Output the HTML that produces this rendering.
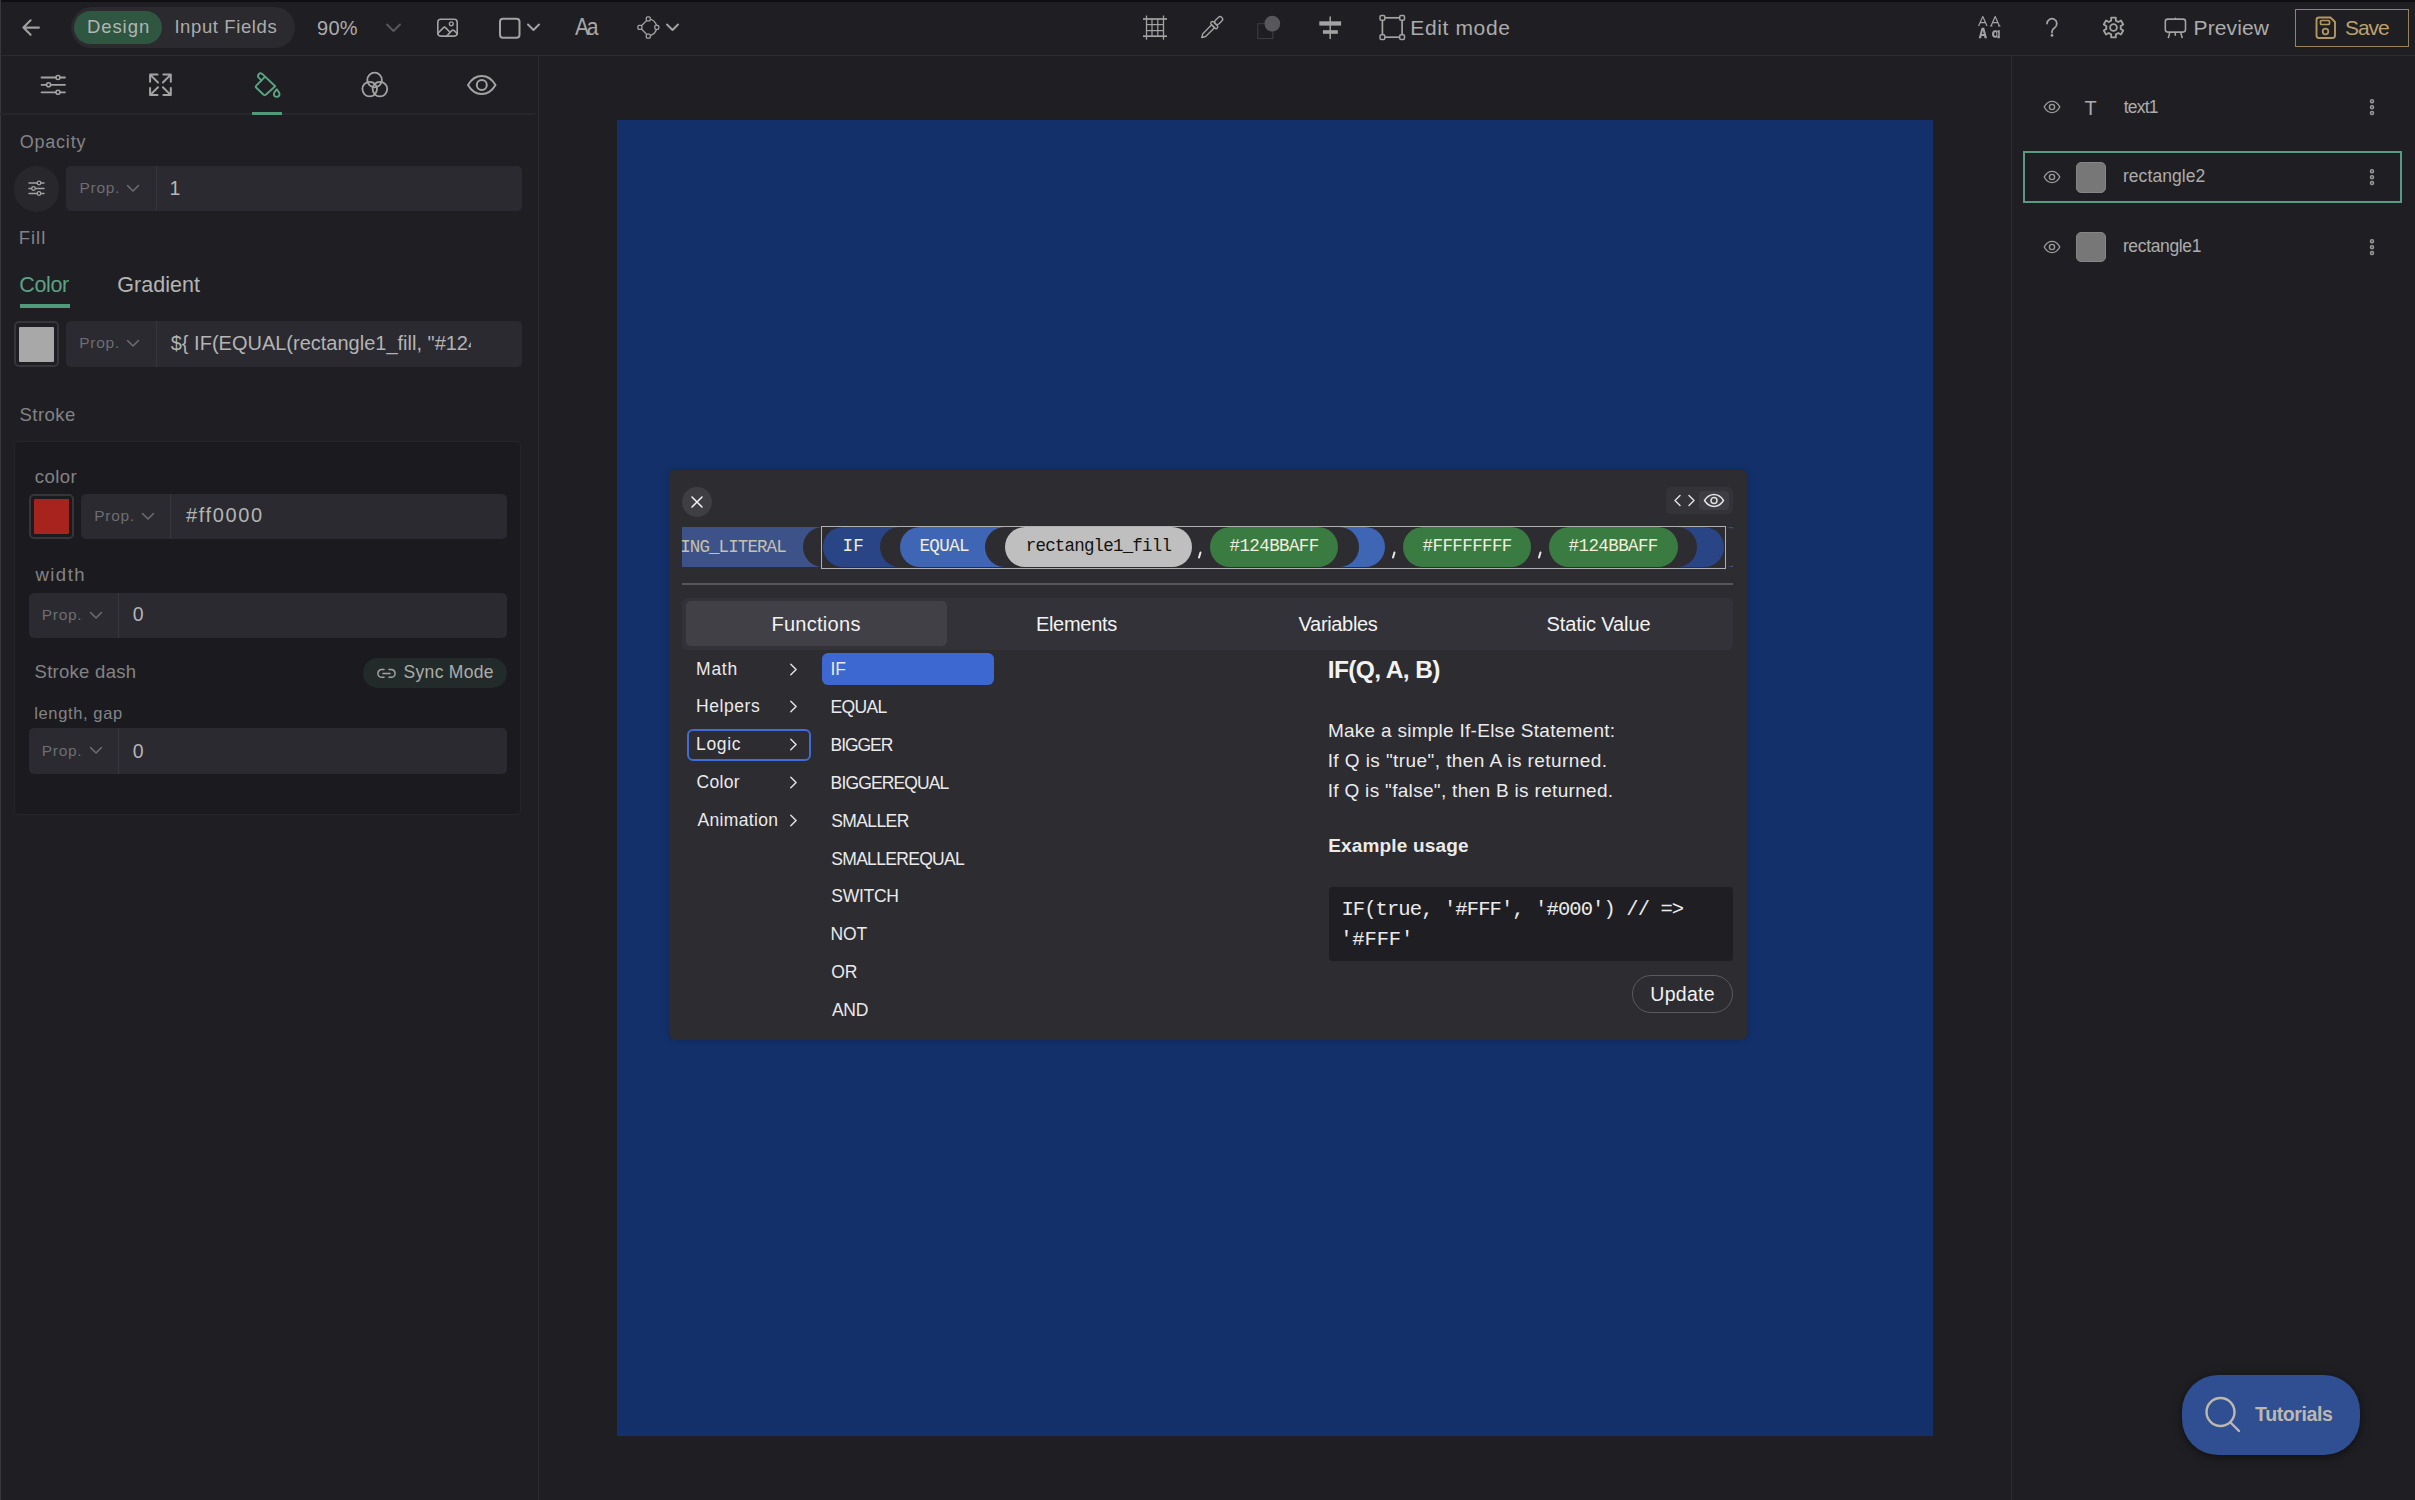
<!DOCTYPE html><html><head><meta charset="utf-8"><style>
html,body{margin:0;padding:0;}
body{width:2415px;height:1500px;overflow:hidden;position:relative;background:#1f1f23;font-family:"Liberation Sans",sans-serif;}
.t{position:absolute;white-space:pre;}
.r{position:absolute;}
</style></head><body>
<div class="r" style="left:0px;top:0px;width:2415px;height:56px;background:#1f1f23;"></div>
<div class="r" style="left:0px;top:0px;width:2415px;height:2px;background:#0f0f11;"></div>
<div class="r" style="left:0px;top:55px;width:2415px;height:1px;background:#2b2b30;"></div>
<div class="r" style="left:0px;top:0px;width:1.3px;height:1500px;background:#37373c;"></div>
<svg class="r" style="left:14px;top:12px;" width="36" height="32" viewBox="14 12 36 32" fill="none"><path d="M38.9 27.6H24M30.6 20.3L23.4 27.6 30.6 34.8" stroke="#a0a0a0" stroke-width="2.1" stroke-linecap="round" stroke-linejoin="round"/></svg>
<div class="r" style="left:71px;top:7px;width:224px;height:41px;background:#2a2a2f;border-radius:21px;"></div>
<div class="r" style="left:74px;top:11px;width:87.5px;height:33px;background:#2e5641;border-radius:17px;"></div>
<div class="t" style="left:86.90px;top:17.57px;font-size:18.5px;line-height:18.5px;color:#b4b4b4;font-family:'Liberation Sans', sans-serif;letter-spacing:0.945px;">Design</div>
<div class="t" style="left:174.38px;top:17.57px;font-size:18.5px;line-height:18.5px;color:#acacac;font-family:'Liberation Sans', sans-serif;letter-spacing:0.602px;">Input Fields</div>
<div class="t" style="left:317.12px;top:17.53px;font-size:20px;line-height:20px;color:#acacac;font-family:'Liberation Sans', sans-serif;letter-spacing:0.250px;">90%</div>
<svg class="r" style="left:385px;top:22px;" width="17" height="12" viewBox="0 0 17 12" fill="none"><path d="M2 2.5l6.5 6.5L15 2.5" stroke="#5a5a5e" stroke-width="1.8" stroke-linecap="round" stroke-linejoin="round"/></svg>
<svg class="r" style="left:432px;top:14px;" width="30" height="28" viewBox="432 14 30 28" fill="none"><g stroke="#a3a3a3" stroke-width="1.6" stroke-linecap="round" stroke-linejoin="round"><rect x="437.8" y="19.2" width="19.4" height="16.9" rx="3"/><circle cx="451.3" cy="23.8" r="1.9" stroke-width="1.4"/><path d="M437.9 33.2L443.5 27.6Q444.5 26.7 445.5 27.6L449.5 31.8"/><path d="M446.5 36.3L452 30.4Q452.9 29.6 453.8 30.4L457.4 33.6"/></g></svg>
<svg class="r" style="left:498px;top:17px;" width="23" height="22" viewBox="0 0 23 22" fill="none"><rect x="2" y="1.8" width="19.5" height="19" rx="3" stroke="#a3a3a3" stroke-width="2"/></svg>
<svg class="r" style="left:526px;top:22px;" width="15" height="11" viewBox="0 0 15 11" fill="none"><path d="M2 2.5l5.5 5.5L13 2.5" stroke="#a3a3a3" stroke-width="2" stroke-linecap="round" stroke-linejoin="round"/></svg>
<div class="t" style="left:574.80px;top:15.32px;font-size:24.5px;line-height:24.5px;color:#a8a8a8;font-family:'Liberation Sans', sans-serif;letter-spacing:-2.700px;transform:scaleX(0.86);transform-origin:0 0;font-weight:300;">Aa</div>
<svg class="r" style="left:636px;top:15px;" width="25" height="25" viewBox="0 0 25 25" fill="none"><path d="M12.3 3.9L3.9 12.3 12.3 21.1" stroke="#a3a3a3" stroke-width="1.3" stroke-linejoin="round"/><path d="M12.3 3.9A8.4 8.4 0 0 1 20.7 12.3 8.4 8.4 0 0 1 12.3 20.7" stroke="#a3a3a3" stroke-width="1.3"/><rect x="10.3" y="1.9" width="4" height="4" rx="1.2" fill="#1f1f23" stroke="#a3a3a3" stroke-width="1.3"/><rect x="1.9" y="10.3" width="4" height="4" rx="1.2" fill="#1f1f23" stroke="#a3a3a3" stroke-width="1.3"/><rect x="18.8" y="10.3" width="4" height="4" rx="1.2" fill="#1f1f23" stroke="#a3a3a3" stroke-width="1.3"/><rect x="10.3" y="19.1" width="4" height="4" rx="1.2" fill="#1f1f23" stroke="#a3a3a3" stroke-width="1.3"/></svg>
<svg class="r" style="left:665px;top:22px;" width="15" height="11" viewBox="0 0 15 11" fill="none"><path d="M2 2.5l5.5 5.5L13 2.5" stroke="#a3a3a3" stroke-width="2" stroke-linecap="round" stroke-linejoin="round"/></svg>
<svg class="r" style="left:1140px;top:12px;" width="30" height="30" viewBox="1140 12 30 30" fill="none"><path d="M1146.5 15.5V39.7" stroke="#a3a3a3" stroke-width="1.3"/><path d="M1163.5 15.5V39.7" stroke="#a3a3a3" stroke-width="1.3"/><path d="M1143 19H1167" stroke="#a3a3a3" stroke-width="1.7"/><path d="M1143 36.2H1167" stroke="#a3a3a3" stroke-width="1.7"/><path d="M1152 19V36.2" stroke="#a3a3a3" stroke-width="1.2"/><path d="M1157.8 19V36.2" stroke="#a3a3a3" stroke-width="1.2"/><path d="M1146.5 24.6H1163.5" stroke="#a3a3a3" stroke-width="1.2"/><path d="M1146.5 30.6H1163.5" stroke="#a3a3a3" stroke-width="1.2"/></svg>
<svg class="r" style="left:1196px;top:12px;" width="32" height="32" viewBox="0 0 32 32" fill="none"><g transform="translate(15.65 15.65) rotate(-45) translate(-14.5 0)" stroke="#a3a3a3" stroke-width="1.4" stroke-linejoin="round"><path d="M0.5 0L4 -2H16.5V2H4Z"/><rect x="16.5" y="-4.3" width="3.4" height="8.6" rx="1.7"/><rect x="19.9" y="-2.5" width="9" height="5" rx="2.5"/></g></svg>
<svg class="r" style="left:1250px;top:10px;" width="35" height="35" viewBox="0 0 35 35" fill="none"><rect x="7.8" y="13.7" width="15.1" height="14.9" stroke="#3e3e43" stroke-width="1"/><circle cx="22.3" cy="13.6" r="7.85" fill="#58585c"/></svg>
<svg class="r" style="left:1315px;top:12px;" width="30" height="30" viewBox="0 0 30 30" fill="none"><path d="M15.2 5V26.5" stroke="#a3a3a3" stroke-width="1.5" stroke-linecap="round"/><rect x="4.3" y="9.3" width="21.8" height="4.3" fill="#a3a3a3"/><rect x="7.9" y="18.2" width="14.9" height="3.6" fill="#a3a3a3"/></svg>
<svg class="r" style="left:1375px;top:10px;" width="35" height="35" viewBox="0 0 35 35" fill="none"><rect x="7.4" y="7.8" width="19.7" height="19.4" stroke="#a3a3a3" stroke-width="1.7"/><rect x="5.0" y="5.4" width="4.8" height="4.8" rx="1.3" fill="#1f1f23" stroke="#a3a3a3" stroke-width="1.5"/><rect x="24.700000000000003" y="5.4" width="4.8" height="4.8" rx="1.3" fill="#1f1f23" stroke="#a3a3a3" stroke-width="1.5"/><rect x="5.0" y="24.8" width="4.8" height="4.8" rx="1.3" fill="#1f1f23" stroke="#a3a3a3" stroke-width="1.5"/><rect x="24.700000000000003" y="24.8" width="4.8" height="4.8" rx="1.3" fill="#1f1f23" stroke="#a3a3a3" stroke-width="1.5"/></svg>
<div class="t" style="left:1410.25px;top:16.97px;font-size:21px;line-height:21px;color:#acacac;font-family:'Liberation Sans', sans-serif;letter-spacing:0.641px;">Edit mode</div>
<svg class="r" style="left:1975px;top:14px;" width="28" height="28" viewBox="0 0 28 28" fill="none"><g stroke="#a3a3a3" fill="none" stroke-linejoin="round"><path d="M3.6 12L7.8 2.6 12 12M5.2 8.6H10.4" stroke-width="1.2"/><path d="M16 12L20.2 2.6 24.4 12M17.6 8.6H22.8M15 12H17.5M23 12H25.5" stroke-width="1.2"/></g><path d="M3.7 24.3L6.6 13.7H9.2L12 24.3H9.6L9.1 22H6.6L6.1 24.3ZM7 20H8.7L7.85 16.2Z" fill="#a3a3a3"/><path d="M20.2 16.2a3 3.6 0 1 0 0 7.6a3 3.6 0 1 0 0-7.6ZM22.4 16.2H24.8V24.3H22.4Z" fill="#a3a3a3"/><ellipse cx="20.3" cy="20" rx="1.1" ry="2" fill="#1f1f23"/></svg>
<svg class="r" style="left:2040px;top:14px;" width="24" height="26" viewBox="0 0 24 26" fill="none"><path d="M7 9.6a4.9 4.9 0 1 1 7.6 4.1c-1.6 1.1-2.6 2.1-2.6 3.8v1" stroke="#a3a3a3" stroke-width="1.8" stroke-linecap="round"/><circle cx="12" cy="21.4" r="1.4" fill="#a3a3a3"/></svg>
<svg class="r" style="left:2100px;top:14px;" width="27" height="27" viewBox="0 0 27 27" fill="none"><path d="M11.12 6.60L11.21 3.56L15.79 3.56L15.88 6.60L18.29 7.99L20.96 6.54L23.25 10.52L20.67 12.11L20.67 14.89L23.25 16.48L20.96 20.46L18.29 19.01L15.88 20.40L15.79 23.44L11.21 23.44L11.12 20.40L8.71 19.01L6.04 20.46L3.75 16.48L6.33 14.89L6.33 12.11L3.75 10.52L6.04 6.54L8.71 7.99Z" stroke="#a3a3a3" stroke-width="1.8" stroke-linejoin="round"/><circle cx="13.5" cy="13.5" r="3.4" stroke="#a3a3a3" stroke-width="1.8"/></svg>
<svg class="r" style="left:2155px;top:8px;" width="45" height="40" viewBox="2155 8 45 40" fill="none"><g stroke="#a3a3a3" stroke-width="1.6" stroke-linecap="round" stroke-linejoin="round"><rect x="2165.3" y="19.1" width="20.2" height="13" rx="2.5"/><path d="M2169.8 32.6L2168.4 37.5M2175.3 32.6V35.3M2180.7 32.6L2182.1 37.5"/></g><path d="M2174.3 19.2L2175.3 17 2176.3 19.2Z" fill="#a3a3a3"/></svg>
<div class="t" style="left:2193.55px;top:16.97px;font-size:21px;line-height:21px;color:#acacac;font-family:'Liberation Sans', sans-serif;letter-spacing:0.117px;">Preview</div>
<div class="r" style="left:2294.5px;top:9px;width:114.0px;height:37.5px;border:1.7px solid #98835a;box-sizing:border-box;"></div>
<svg class="r" style="left:2313px;top:15px;" width="25" height="26" viewBox="0 0 25 26" fill="none"><path d="M3.5 5a2.5 2.5 0 0 1 2.5-2.5h11.5l4.5 4.5v13.5a2.5 2.5 0 0 1-2.5 2.5H6a2.5 2.5 0 0 1-2.5-2.5z" stroke="#b09862" stroke-width="1.9" stroke-linejoin="round"/><rect x="7.5" y="5.5" width="9" height="4" rx="1" stroke="#b09862" stroke-width="1.7"/><circle cx="12.5" cy="16.5" r="2.8" stroke="#b09862" stroke-width="1.8"/></svg>
<div class="t" style="left:2345.00px;top:16.67px;font-size:21px;line-height:21px;color:#bba16d;font-family:'Liberation Sans', sans-serif;letter-spacing:-1.100px;">Save</div>
<div class="r" style="left:538px;top:56px;width:1px;height:1444px;background:#2b2b30;"></div>
<div class="r" style="left:0px;top:113px;width:535px;height:2px;background:#26262b;"></div>
<svg class="r" style="left:36px;top:68px;" width="36" height="32" viewBox="36 68 36 32" fill="none"><path d="M41.5 77.5H65" stroke="#a3a3a3" stroke-width="1.8" stroke-linecap="round"/><circle cx="58" cy="77.5" r="2" fill="#1f1f23" stroke="#a3a3a3" stroke-width="1.6"/><path d="M41.5 84.8H65" stroke="#a3a3a3" stroke-width="1.8" stroke-linecap="round"/><circle cx="48.6" cy="84.8" r="2" fill="#1f1f23" stroke="#a3a3a3" stroke-width="1.6"/><path d="M41.5 92.3H65" stroke="#a3a3a3" stroke-width="1.8" stroke-linecap="round"/><circle cx="58" cy="92.3" r="2" fill="#1f1f23" stroke="#a3a3a3" stroke-width="1.6"/></svg>
<svg class="r" style="left:140px;top:66px;" width="40" height="38" viewBox="140 66 40 38" fill="none"><path d="M157.5 74.6H150.1V81.7M150.1 74.6L158 82.5M163.4 74.6H170.8V81.7M170.8 74.6L162.9 82.5M150.1 88V95.1H157.5M150.1 95.1L158 87.2M170.8 88V95.1H163.4M170.8 95.1L162.9 87.2" stroke="#a3a3a3" stroke-width="2" stroke-linecap="round" stroke-linejoin="round"/></svg>
<svg class="r" style="left:248px;top:66px;" width="35" height="34" viewBox="248 66 35 34" fill="none"><g stroke="#5aa383" stroke-width="1.9" stroke-linejoin="round" stroke-linecap="round"><path d="M261.4 80.4L256.3 85.6Q255.2 86.7 256.3 87.8L263.6 94.7Q264.7 95.8 265.8 94.7L275.2 86.2L262.2 73.9A2.6 2.6 0 0 0 258.7 77.7Z"/><path d="M264.6 77.2L261.4 80.4"/><path d="M276.7 89.3C278.3 91.2 279.5 92.6 279.5 94.1A2.8 2.8 0 0 1 273.9 94.1C273.9 92.6 275.1 91.2 276.7 89.3Z"/></g></svg>
<svg class="r" style="left:358px;top:69px;" width="34" height="32" viewBox="0 0 34 32" fill="none"><circle cx="16.6" cy="11" r="7.3" stroke="#a3a3a3" stroke-width="1.8"/><circle cx="11.7" cy="20.1" r="7.3" stroke="#a3a3a3" stroke-width="1.8"/><circle cx="21.9" cy="20.1" r="7.3" stroke="#a3a3a3" stroke-width="1.8"/></svg>
<svg class="r" style="left:465px;top:72px;" width="33" height="25" viewBox="0 0 33 25" fill="none"><path d="M3 13C6.5 7 11 4 16.7 4S27 7 30.5 13C27 19 22.5 22 16.7 22S6.5 19 3 13z" stroke="#a3a3a3" stroke-width="2" stroke-linejoin="round"/><circle cx="16.8" cy="13" r="5" stroke="#a3a3a3" stroke-width="2"/></svg>
<div class="r" style="left:252px;top:111.7px;width:30px;height:3.0px;background:#4f9b79;"></div>
<div class="t" style="left:19.73px;top:132.50px;font-size:18px;line-height:18px;color:#838387;font-family:'Liberation Sans', sans-serif;letter-spacing:0.779px;">Opacity</div>
<div class="r" style="left:13.7px;top:166px;width:45.599999999999994px;height:45.5px;background:#27272c;border-radius:50%;"></div>
<svg class="r" style="left:27px;top:180px;" width="19" height="17" viewBox="0 0 19 17" fill="none"><path d="M2 3H17" stroke="#a3a3a3" stroke-width="1.5" stroke-linecap="round"/><circle cx="12" cy="3" r="1.8" fill="#27272c" stroke="#a3a3a3" stroke-width="1.3"/><path d="M2 8.5H17" stroke="#a3a3a3" stroke-width="1.5" stroke-linecap="round"/><circle cx="6.5" cy="8.5" r="1.8" fill="#27272c" stroke="#a3a3a3" stroke-width="1.3"/><path d="M2 13.5H17" stroke="#a3a3a3" stroke-width="1.5" stroke-linecap="round"/><circle cx="12" cy="13.5" r="1.8" fill="#27272c" stroke="#a3a3a3" stroke-width="1.3"/></svg>
<div class="r" style="left:66.3px;top:165.7px;width:455.40000000000003px;height:45.60000000000002px;background:#2a2a30;border-radius:5px;"></div>
<div class="r" style="left:155.8px;top:165.7px;width:1.0px;height:45.60000000000002px;background:#36363c;"></div>
<div class="t" style="left:79.55px;top:180.14px;font-size:15.5px;line-height:15.5px;color:#6d6d72;font-family:'Liberation Sans', sans-serif;letter-spacing:0.706px;">Prop.</div>
<svg class="r" style="left:126.3px;top:183.7px;" width="14" height="9" viewBox="0 0 14 9" fill="none"><path d="M1.5 1.5l5.5 5.5 5.5-5.5" stroke="#6d6d72" stroke-width="1.5" stroke-linecap="round" stroke-linejoin="round"/></svg>
<div class="t" style="left:169.50px;top:178.91px;font-size:19.5px;line-height:19.5px;color:#b8b8b8;font-family:'Liberation Sans', sans-serif;">1</div>
<div class="t" style="left:18.80px;top:228.97px;font-size:18.5px;line-height:18.5px;color:#838387;font-family:'Liberation Sans', sans-serif;letter-spacing:0.942px;">Fill</div>
<div class="t" style="left:19.30px;top:274.59px;font-size:21.5px;line-height:21.5px;color:#5ba281;font-family:'Liberation Sans', sans-serif;letter-spacing:-0.356px;">Color</div>
<div class="t" style="left:117.30px;top:274.59px;font-size:21.5px;line-height:21.5px;color:#b4b4b4;font-family:'Liberation Sans', sans-serif;letter-spacing:0.046px;">Gradient</div>
<div class="r" style="left:20.3px;top:304.3px;width:49.8px;height:3.5px;background:#4f9b79;"></div>
<div class="r" style="left:14px;top:321px;width:45.4px;height:45.69999999999999px;border-radius:5px;border:2px solid #35353a;box-sizing:border-box;"></div>
<div class="r" style="left:18.8px;top:327px;width:35.7px;height:35.30000000000001px;background:#a8a8a8;border-radius:1px;"></div>
<div class="r" style="left:66px;top:321px;width:455.70000000000005px;height:45.69999999999999px;background:#2a2a30;border-radius:5px;"></div>
<div class="r" style="left:156px;top:321px;width:1px;height:45.69999999999999px;background:#36363c;"></div>
<div class="t" style="left:79.25px;top:335.44px;font-size:15.5px;line-height:15.5px;color:#6d6d72;font-family:'Liberation Sans', sans-serif;letter-spacing:0.706px;">Prop.</div>
<svg class="r" style="left:126px;top:339px;" width="14" height="9" viewBox="0 0 14 9" fill="none"><path d="M1.5 1.5l5.5 5.5 5.5-5.5" stroke="#6d6d72" stroke-width="1.5" stroke-linecap="round" stroke-linejoin="round"/></svg>
<div class="r" style="left:156px;top:321px;width:315px;height:46px;overflow:hidden;">
<div class="t" style="left:14.75px;top:11.83px;font-size:20px;line-height:20px;color:#b4b4b4;font-family:'Liberation Sans', sans-serif;">${ IF(EQUAL(rectangle1_fill, "#124BBAFF"</div>
</div>
<div class="t" style="left:19.52px;top:406.07px;font-size:18.5px;line-height:18.5px;color:#838387;font-family:'Liberation Sans', sans-serif;letter-spacing:0.450px;">Stroke</div>
<div class="r" style="left:14.4px;top:441.4px;width:506.9px;height:374.0px;background:#1b1b1f;border-radius:4px;border:1px solid #26262a;box-sizing:border-box;"></div>
<div class="t" style="left:34.65px;top:467.57px;font-size:18.5px;line-height:18.5px;color:#838387;font-family:'Liberation Sans', sans-serif;letter-spacing:0.494px;">color</div>
<div class="r" style="left:28.5px;top:493.6px;width:45.5px;height:45.0px;border-radius:5px;border:2px solid #35353a;box-sizing:border-box;"></div>
<div class="r" style="left:33.6px;top:499px;width:35.4px;height:34.5px;background:#a6231e;border-radius:1px;"></div>
<div class="r" style="left:81px;top:493.6px;width:426px;height:45.0px;background:#2a2a30;border-radius:5px;"></div>
<div class="r" style="left:170.4px;top:493.6px;width:1.0px;height:45.0px;background:#36363c;"></div>
<div class="t" style="left:94.25px;top:508.04px;font-size:15.5px;line-height:15.5px;color:#6d6d72;font-family:'Liberation Sans', sans-serif;letter-spacing:0.706px;">Prop.</div>
<svg class="r" style="left:141px;top:511.6px;" width="14" height="9" viewBox="0 0 14 9" fill="none"><path d="M1.5 1.5l5.5 5.5 5.5-5.5" stroke="#6d6d72" stroke-width="1.5" stroke-linecap="round" stroke-linejoin="round"/></svg>
<div class="t" style="left:186.00px;top:505.43px;font-size:20px;line-height:20px;color:#b4b4b4;font-family:'Liberation Sans', sans-serif;letter-spacing:1.646px;">#ff0000</div>
<div class="t" style="left:35.40px;top:566.07px;font-size:18.5px;line-height:18.5px;color:#838387;font-family:'Liberation Sans', sans-serif;letter-spacing:1.500px;">width</div>
<div class="r" style="left:28.5px;top:592.6px;width:478.5px;height:45.19999999999993px;background:#2a2a30;border-radius:5px;"></div>
<div class="r" style="left:117.9px;top:592.6px;width:1.0px;height:45.19999999999993px;background:#36363c;"></div>
<div class="t" style="left:41.75px;top:607.04px;font-size:15.5px;line-height:15.5px;color:#6d6d72;font-family:'Liberation Sans', sans-serif;letter-spacing:0.706px;">Prop.</div>
<svg class="r" style="left:88.5px;top:610.6px;" width="14" height="9" viewBox="0 0 14 9" fill="none"><path d="M1.5 1.5l5.5 5.5 5.5-5.5" stroke="#6d6d72" stroke-width="1.5" stroke-linecap="round" stroke-linejoin="round"/></svg>
<div class="t" style="left:132.75px;top:605.41px;font-size:19.5px;line-height:19.5px;color:#b4b4b4;font-family:'Liberation Sans', sans-serif;">0</div>
<div class="t" style="left:34.52px;top:663.37px;font-size:18.5px;line-height:18.5px;color:#838387;font-family:'Liberation Sans', sans-serif;letter-spacing:0.285px;">Stroke dash</div>
<div class="r" style="left:363.4px;top:658.3px;width:143.60000000000002px;height:29.700000000000045px;background:#222b2a;border-radius:15px;"></div>
<svg class="r" style="left:376px;top:667px;" width="21" height="13" viewBox="0 0 21 13" fill="none"><path d="M8 2.5H5.8a3.9 3.9 0 0 0 0 7.8H8M13 2.5h2.2a3.9 3.9 0 0 1 0 7.8H13M7 6.4h7" stroke="#a3a3a3" stroke-width="1.5" stroke-linecap="round"/></svg>
<div class="t" style="left:403.55px;top:664.23px;font-size:17.5px;line-height:17.5px;color:#acacac;font-family:'Liberation Sans', sans-serif;letter-spacing:0.312px;">Sync Mode</div>
<div class="t" style="left:34.27px;top:704.88px;font-size:16.5px;line-height:16.5px;color:#838387;font-family:'Liberation Sans', sans-serif;letter-spacing:0.622px;">length, gap</div>
<div class="r" style="left:28.5px;top:728.4px;width:478.5px;height:45.60000000000002px;background:#2a2a30;border-radius:5px;"></div>
<div class="r" style="left:117.9px;top:728.4px;width:1.0px;height:45.60000000000002px;background:#36363c;"></div>
<div class="t" style="left:41.75px;top:742.84px;font-size:15.5px;line-height:15.5px;color:#6d6d72;font-family:'Liberation Sans', sans-serif;letter-spacing:0.706px;">Prop.</div>
<svg class="r" style="left:88.5px;top:746.4px;" width="14" height="9" viewBox="0 0 14 9" fill="none"><path d="M1.5 1.5l5.5 5.5 5.5-5.5" stroke="#6d6d72" stroke-width="1.5" stroke-linecap="round" stroke-linejoin="round"/></svg>
<div class="t" style="left:132.75px;top:741.91px;font-size:19.5px;line-height:19.5px;color:#b4b4b4;font-family:'Liberation Sans', sans-serif;">0</div>
<div class="r" style="left:2011px;top:56px;width:1px;height:1444px;background:#2b2b30;"></div>
<svg class="r" style="left:2043px;top:100px;" width="18" height="14" viewBox="0 0 18 14" fill="none"><path d="M1.2 7C3.2 3.3 5.8 1.4 9 1.4S14.8 3.3 16.8 7C14.8 10.7 12.2 12.6 9 12.6S3.2 10.7 1.2 7z" stroke="#999999" stroke-width="1.35" stroke-linejoin="round"/><circle cx="9" cy="7" r="2.6" stroke="#999999" stroke-width="1.35"/></svg>
<div class="t" style="left:2084.62px;top:98.33px;font-size:20px;line-height:20px;color:#acacac;font-family:'Liberation Sans', sans-serif;">T</div>
<div class="t" style="left:2123.75px;top:98.53px;font-size:17.5px;line-height:17.5px;color:#acacac;font-family:'Liberation Sans', sans-serif;letter-spacing:-0.819px;">text1</div>
<svg class="r" style="left:2368px;top:98px;" width="8" height="18" viewBox="0 0 8 18" fill="none"><circle cx="4" cy="3.3" r="1.65" fill="#5a5a5e" stroke="#9a9a9a" stroke-width="1.2"/><circle cx="4" cy="9.2" r="1.65" fill="#5a5a5e" stroke="#9a9a9a" stroke-width="1.2"/><circle cx="4" cy="15.1" r="1.65" fill="#5a5a5e" stroke="#9a9a9a" stroke-width="1.2"/></svg>
<div class="r" style="left:2023px;top:151px;width:378.5px;height:52px;border:2px solid #5a9a80;box-sizing:border-box;"></div>
<svg class="r" style="left:2043px;top:170px;" width="18" height="14" viewBox="0 0 18 14" fill="none"><path d="M1.2 7C3.2 3.3 5.8 1.4 9 1.4S14.8 3.3 16.8 7C14.8 10.7 12.2 12.6 9 12.6S3.2 10.7 1.2 7z" stroke="#999999" stroke-width="1.35" stroke-linejoin="round"/><circle cx="9" cy="7" r="2.6" stroke="#999999" stroke-width="1.35"/></svg>
<div class="r" style="left:2076px;top:162px;width:30.40000000000009px;height:30.5px;background:#777777;border-radius:5px;border:1px solid #858585;box-sizing:border-box;"></div>
<div class="t" style="left:2122.88px;top:168.43px;font-size:17.5px;line-height:17.5px;color:#acacac;font-family:'Liberation Sans', sans-serif;letter-spacing:0.083px;">rectangle2</div>
<svg class="r" style="left:2368px;top:168px;" width="8" height="18" viewBox="0 0 8 18" fill="none"><circle cx="4" cy="3.3" r="1.65" fill="#5a5a5e" stroke="#9a9a9a" stroke-width="1.2"/><circle cx="4" cy="9.2" r="1.65" fill="#5a5a5e" stroke="#9a9a9a" stroke-width="1.2"/><circle cx="4" cy="15.1" r="1.65" fill="#5a5a5e" stroke="#9a9a9a" stroke-width="1.2"/></svg>
<svg class="r" style="left:2043px;top:240px;" width="18" height="14" viewBox="0 0 18 14" fill="none"><path d="M1.2 7C3.2 3.3 5.8 1.4 9 1.4S14.8 3.3 16.8 7C14.8 10.7 12.2 12.6 9 12.6S3.2 10.7 1.2 7z" stroke="#999999" stroke-width="1.35" stroke-linejoin="round"/><circle cx="9" cy="7" r="2.6" stroke="#999999" stroke-width="1.35"/></svg>
<div class="r" style="left:2076px;top:232px;width:30.40000000000009px;height:30.30000000000001px;background:#777777;border-radius:5px;border:1px solid #858585;box-sizing:border-box;"></div>
<div class="t" style="left:2122.88px;top:238.43px;font-size:17.5px;line-height:17.5px;color:#acacac;font-family:'Liberation Sans', sans-serif;letter-spacing:-0.350px;">rectangle1</div>
<svg class="r" style="left:2368px;top:238px;" width="8" height="18" viewBox="0 0 8 18" fill="none"><circle cx="4" cy="3.3" r="1.65" fill="#5a5a5e" stroke="#9a9a9a" stroke-width="1.2"/><circle cx="4" cy="9.2" r="1.65" fill="#5a5a5e" stroke="#9a9a9a" stroke-width="1.2"/><circle cx="4" cy="15.1" r="1.65" fill="#5a5a5e" stroke="#9a9a9a" stroke-width="1.2"/></svg>
<div class="r" style="left:617px;top:120px;width:1316px;height:1316px;background:#13306b;"></div>
<div class="r" style="left:2182px;top:1374.6px;width:177.5999999999999px;height:80.80000000000018px;background:#2f4f92;border-radius:36px;box-shadow:0 2px 10px rgba(0,0,0,0.5);"></div>
<svg class="r" style="left:2202px;top:1394px;" width="42" height="42" viewBox="0 0 42 42" fill="none"><circle cx="18.5" cy="18" r="14" stroke="#bdb8ad" stroke-width="2.4"/><path d="M28.5 28.5L37 37" stroke="#bdb8ad" stroke-width="2.4" stroke-linecap="round"/></svg>
<div class="t" style="left:2255.07px;top:1404.51px;font-size:19.5px;line-height:19.5px;color:#bdb8ad;font-family:'Liberation Sans', sans-serif;font-weight:700;letter-spacing:-0.375px;">Tutorials</div>
<div class="r" style="left:668.5px;top:470px;width:1078.0px;height:570px;background:#2c2c31;border-radius:6px;box-shadow:0 0 6px rgba(0,0,0,0.2);"></div>
<div class="r" style="left:682px;top:487px;width:29.5px;height:30px;background:#3e3e43;border-radius:50%;"></div>
<svg class="r" style="left:689px;top:494px;" width="16" height="16" viewBox="0 0 16 16" fill="none"><path d="M3 3l10 10M13 3L3 13" stroke="#f0f0f0" stroke-width="1.6" stroke-linecap="round"/></svg>
<div class="r" style="left:1665.7px;top:487px;width:67.09999999999991px;height:27.299999999999955px;background:#333338;border-radius:5px;"></div>
<div class="r" style="left:1699px;top:490.7px;width:29.700000000000045px;height:19.30000000000001px;background:#3d3d43;border-radius:4px;"></div>
<svg class="r" style="left:1673px;top:493px;" width="23" height="15" viewBox="0 0 23 15" fill="none"><path d="M7 2.5L2 7.5l5 5M16 2.5l5 5-5 5" stroke="#e0e0e0" stroke-width="1.5" stroke-linecap="round" stroke-linejoin="round"/></svg>
<svg class="r" style="left:1703px;top:493px;" width="22" height="15" viewBox="0 0 22 15" fill="none"><path d="M1.5 7.5C4 3.6 7 1.6 11 1.6S18 3.6 20.5 7.5C18 11.4 15 13.4 11 13.4S4 11.4 1.5 7.5z" stroke="#e0e0e0" stroke-width="1.5" stroke-linejoin="round"/><circle cx="11" cy="7.5" r="3" stroke="#e0e0e0" stroke-width="1.5"/></svg>
<div class="r" style="left:682px;top:520px;width:1051px;height:56px;overflow:hidden;">
<div class="r" style="left:0px;top:7px;width:1078px;height:40px;background:#3d5288;border-radius:0 20px 20px 0;"></div>
<div class="r" style="left:121px;top:7px;width:942px;height:40px;background:#2c2c31;border-radius:20px 20px 20px 20px;"></div>
<div class="r" style="left:141px;top:7px;width:901px;height:40px;background:#2a4586;border-radius:20px 20px 20px 20px;"></div>
<div class="r" style="left:197.5px;top:7px;width:817.5px;height:40px;background:#2c2c31;border-radius:20px 20px 20px 20px;"></div>
<div class="r" style="left:218px;top:7px;width:485px;height:40px;background:#3f66b5;border-radius:20px 20px 20px 20px;"></div>
<div class="r" style="left:303.4px;top:7px;width:373.19999999999993px;height:40px;background:#2c2c31;border-radius:20px 20px 20px 20px;"></div>
<div class="r" style="left:323.29999999999995px;top:7px;width:186.29999999999995px;height:40px;background:#bfbfbf;border-radius:20px 20px 20px 20px;"></div>
<div class="r" style="left:528px;top:7px;width:128.4000000000001px;height:40px;background:#3a7b42;border-radius:20px 20px 20px 20px;"></div>
<div class="r" style="left:721px;top:7px;width:127.59999999999991px;height:40px;background:#3a7b42;border-radius:20px 20px 20px 20px;"></div>
<div class="r" style="left:867.4000000000001px;top:7px;width:128.29999999999995px;height:40px;background:#3a7b42;border-radius:20px 20px 20px 20px;"></div>
<div class="r" style="left:139px;top:5.7px;width:905px;height:43.0px;border:1.5px solid #b0b0b0;box-sizing:border-box;"></div>
</div>
<div class="t" style="left:680.25px;top:538.63px;font-size:17.5px;line-height:17.5px;color:#c6c0ae;font-family:'Liberation Mono', monospace;letter-spacing:-0.912px;">ING_LITERAL</div>
<div class="t" style="left:842.45px;top:538.43px;font-size:17.5px;line-height:17.5px;color:#f2eedc;font-family:'Liberation Mono', monospace;letter-spacing:0.200px;">IF</div>
<div class="t" style="left:919.42px;top:538.43px;font-size:17.5px;line-height:17.5px;color:#f2eedc;font-family:'Liberation Mono', monospace;letter-spacing:-0.575px;">EQUAL</div>
<div class="t" style="left:1025.80px;top:538.43px;font-size:17.5px;line-height:17.5px;color:#111111;font-family:'Liberation Mono', monospace;letter-spacing:-0.816px;">rectangle1_fill</div>
<div class="t" style="left:1229.53px;top:538.43px;font-size:17.5px;line-height:17.5px;color:#f2eedc;font-family:'Liberation Mono', monospace;letter-spacing:-0.597px;">#124BBAFF</div>
<div class="t" style="left:1422.62px;top:538.43px;font-size:17.5px;line-height:17.5px;color:#f2eedc;font-family:'Liberation Mono', monospace;letter-spacing:-0.597px;">#FFFFFFFF</div>
<div class="t" style="left:1568.62px;top:538.43px;font-size:17.5px;line-height:17.5px;color:#f2eedc;font-family:'Liberation Mono', monospace;letter-spacing:-0.597px;">#124BBAFF</div>
<svg class="r" style="left:1197px;top:551px;" width="6" height="8" viewBox="0 0 6 8" fill="none"><path d="M3.5 1.5L2 6.5" stroke="#e8e8e8" stroke-width="2" stroke-linecap="round"/></svg>
<svg class="r" style="left:1390.5px;top:551px;" width="6" height="8" viewBox="0 0 6 8" fill="none"><path d="M3.5 1.5L2 6.5" stroke="#e8e8e8" stroke-width="2" stroke-linecap="round"/></svg>
<svg class="r" style="left:1536.6px;top:551px;" width="6" height="8" viewBox="0 0 6 8" fill="none"><path d="M3.5 1.5L2 6.5" stroke="#e8e8e8" stroke-width="2" stroke-linecap="round"/></svg>
<div class="r" style="left:682px;top:582.5px;width:1051px;height:2.0px;background:#56565b;"></div>
<div class="r" style="left:682px;top:597.5px;width:1051px;height:52.5px;background:#323238;border-radius:6px;"></div>
<div class="r" style="left:686.4px;top:601.3px;width:260.6px;height:44.700000000000045px;background:#404046;border-radius:5px;"></div>
<div class="t" style="left:771.38px;top:614.03px;font-size:20px;line-height:20px;color:#f2f2f2;font-family:'Liberation Sans', sans-serif;letter-spacing:0.291px;">Functions</div>
<div class="t" style="left:1035.88px;top:614.03px;font-size:20px;line-height:20px;color:#f2f2f2;font-family:'Liberation Sans', sans-serif;letter-spacing:-0.271px;">Elements</div>
<div class="t" style="left:1298.58px;top:614.03px;font-size:20px;line-height:20px;color:#f2f2f2;font-family:'Liberation Sans', sans-serif;letter-spacing:-0.338px;">Variables</div>
<div class="t" style="left:1546.62px;top:614.03px;font-size:20px;line-height:20px;color:#f2f2f2;font-family:'Liberation Sans', sans-serif;letter-spacing:-0.118px;">Static Value</div>
<div class="r" style="left:687.3px;top:728.8px;width:124.0px;height:32.5px;border-radius:6px;border:2px solid #3f6cd8;box-sizing:border-box;"></div>
<div class="t" style="left:696.12px;top:660.73px;font-size:17.5px;line-height:17.5px;color:#eaeaea;font-family:'Liberation Sans', sans-serif;letter-spacing:0.708px;">Math</div>
<svg class="r" style="left:786.5px;top:661.5px;" width="12" height="14" viewBox="0 0 12 14" fill="none"><path d="M3.8 2.2l5.3 5.3-5.3 5.3" stroke="#e0e0e0" stroke-width="1.5" stroke-linecap="round" stroke-linejoin="round"/></svg>
<div class="t" style="left:696.12px;top:698.03px;font-size:17.5px;line-height:17.5px;color:#eaeaea;font-family:'Liberation Sans', sans-serif;letter-spacing:0.542px;">Helpers</div>
<svg class="r" style="left:786.5px;top:698.8px;" width="12" height="14" viewBox="0 0 12 14" fill="none"><path d="M3.8 2.2l5.3 5.3-5.3 5.3" stroke="#e0e0e0" stroke-width="1.5" stroke-linecap="round" stroke-linejoin="round"/></svg>
<div class="t" style="left:696.12px;top:735.93px;font-size:17.5px;line-height:17.5px;color:#eaeaea;font-family:'Liberation Sans', sans-serif;letter-spacing:0.625px;">Logic</div>
<svg class="r" style="left:786.5px;top:736.7px;" width="12" height="14" viewBox="0 0 12 14" fill="none"><path d="M3.8 2.2l5.3 5.3-5.3 5.3" stroke="#e0e0e0" stroke-width="1.5" stroke-linecap="round" stroke-linejoin="round"/></svg>
<div class="t" style="left:696.62px;top:773.73px;font-size:17.5px;line-height:17.5px;color:#eaeaea;font-family:'Liberation Sans', sans-serif;letter-spacing:0.312px;">Color</div>
<svg class="r" style="left:786.5px;top:774.5px;" width="12" height="14" viewBox="0 0 12 14" fill="none"><path d="M3.8 2.2l5.3 5.3-5.3 5.3" stroke="#e0e0e0" stroke-width="1.5" stroke-linecap="round" stroke-linejoin="round"/></svg>
<div class="t" style="left:697.50px;top:811.93px;font-size:17.5px;line-height:17.5px;color:#eaeaea;font-family:'Liberation Sans', sans-serif;letter-spacing:0.344px;">Animation</div>
<svg class="r" style="left:786.5px;top:812.7px;" width="12" height="14" viewBox="0 0 12 14" fill="none"><path d="M3.8 2.2l5.3 5.3-5.3 5.3" stroke="#e0e0e0" stroke-width="1.5" stroke-linecap="round" stroke-linejoin="round"/></svg>
<div class="r" style="left:822px;top:652.8px;width:172px;height:32.5px;background:#3d67d1;border-radius:6px;"></div>
<div class="t" style="left:830.38px;top:661.23px;font-size:17.5px;line-height:17.5px;color:#eaeaea;font-family:'Liberation Sans', sans-serif;">IF</div>
<div class="t" style="left:830.62px;top:698.73px;font-size:17.5px;line-height:17.5px;color:#eaeaea;font-family:'Liberation Sans', sans-serif;letter-spacing:-0.669px;">EQUAL</div>
<div class="t" style="left:830.62px;top:736.73px;font-size:17.5px;line-height:17.5px;color:#eaeaea;font-family:'Liberation Sans', sans-serif;letter-spacing:-1.075px;">BIGGER</div>
<div class="t" style="left:830.62px;top:774.73px;font-size:17.5px;line-height:17.5px;color:#eaeaea;font-family:'Liberation Sans', sans-serif;letter-spacing:-0.867px;">BIGGEREQUAL</div>
<div class="t" style="left:831.25px;top:813.03px;font-size:17.5px;line-height:17.5px;color:#eaeaea;font-family:'Liberation Sans', sans-serif;letter-spacing:-0.604px;">SMALLER</div>
<div class="t" style="left:831.25px;top:850.63px;font-size:17.5px;line-height:17.5px;color:#eaeaea;font-family:'Liberation Sans', sans-serif;letter-spacing:-0.684px;">SMALLEREQUAL</div>
<div class="t" style="left:831.25px;top:888.23px;font-size:17.5px;line-height:17.5px;color:#eaeaea;font-family:'Liberation Sans', sans-serif;letter-spacing:-0.275px;">SWITCH</div>
<div class="t" style="left:830.62px;top:926.23px;font-size:17.5px;line-height:17.5px;color:#eaeaea;font-family:'Liberation Sans', sans-serif;letter-spacing:-0.125px;">NOT</div>
<div class="t" style="left:831.25px;top:964.13px;font-size:17.5px;line-height:17.5px;color:#eaeaea;font-family:'Liberation Sans', sans-serif;">OR</div>
<div class="t" style="left:832.00px;top:1001.73px;font-size:17.5px;line-height:17.5px;color:#eaeaea;font-family:'Liberation Sans', sans-serif;letter-spacing:-0.312px;">AND</div>
<div class="t" style="left:1327.78px;top:657.92px;font-size:24.5px;line-height:24.5px;color:#f2f2f2;font-family:'Liberation Sans', sans-serif;font-weight:700;letter-spacing:-0.613px;">IF(Q, A, B)</div>
<div class="t" style="left:1327.90px;top:720.99px;font-size:19px;line-height:19px;color:#ebebeb;font-family:'Liberation Sans', sans-serif;letter-spacing:0.273px;">Make a simple If-Else Statement:</div>
<div class="t" style="left:1327.65px;top:751.19px;font-size:19px;line-height:19px;color:#ebebeb;font-family:'Liberation Sans', sans-serif;letter-spacing:0.426px;">If Q is "true", then A is returned.</div>
<div class="t" style="left:1327.65px;top:781.19px;font-size:19px;line-height:19px;color:#ebebeb;font-family:'Liberation Sans', sans-serif;letter-spacing:0.318px;">If Q is "false", then B is returned.</div>
<div class="t" style="left:1328.15px;top:836.29px;font-size:19px;line-height:19px;color:#ebebeb;font-family:'Liberation Sans', sans-serif;font-weight:700;letter-spacing:0.175px;">Example usage</div>
<div class="r" style="left:1329.4px;top:887px;width:403.5999999999999px;height:74px;background:#1f1f23;border-radius:4px;"></div>
<div class="t" style="left:1341.40px;top:899.61px;font-size:20.5px;line-height:20.5px;color:#ebebeb;font-family:'Liberation Mono', monospace;letter-spacing:-0.906px;">IF(true, '#FFF', '#000') // =&gt;</div>
<div class="t" style="left:1340.20px;top:929.51px;font-size:20.5px;line-height:20.5px;color:#ebebeb;font-family:'Liberation Mono', monospace;letter-spacing:-0.150px;">'#FFF'</div>
<div class="r" style="left:1631.7px;top:975px;width:101.29999999999995px;height:37.799999999999955px;border-radius:19px;border:1.8px solid #5a5a5f;box-sizing:border-box;"></div>
<div class="t" style="left:1650.30px;top:984.71px;font-size:19.5px;line-height:19.5px;color:#f0f0f0;font-family:'Liberation Sans', sans-serif;letter-spacing:0.300px;">Update</div>
</body></html>
